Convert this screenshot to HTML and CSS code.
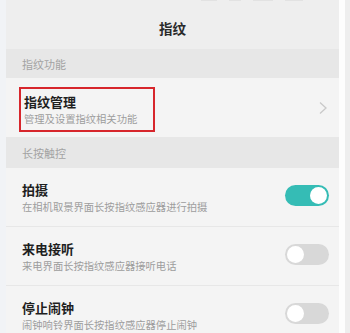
FILE: index.html
```html
<!DOCTYPE html>
<html lang="zh">
<head>
<meta charset="utf-8">
<link rel="stylesheet" href="styles.css">
</head>
<body>
<div class="frame">
  <div class="edge-left"></div>
  <div class="screen">
    <div class="header">
      <div class="status"><span class="s1"></span><span class="s2"></span><span class="s3"></span><span class="s4"></span></div>
      <div class="title">指纹</div>
    </div>
    <div class="section">指纹功能</div>
    <div class="row first">
      <div class="text boxed">
        <div class="name">指纹管理</div>
        <div class="desc">管理及设置指纹相关功能</div>
      </div>
      <svg class="chev" width="10" height="14" viewBox="0 0 10 14"><path d="M2 1.5 L8 7 L2 12.5" fill="none" stroke="#c9c9c9" stroke-width="1.3"/></svg>
    </div>
    <div class="section tall">长按触控</div>
    <div class="row line">
      <div class="text">
        <div class="name">拍摄</div>
        <div class="desc">在相机取景界面长按指纹感应器进行拍摄</div>
      </div>
      <div class="toggle on"><span class="knob"></span></div>
    </div>
    <div class="row line">
      <div class="text">
        <div class="name">来电接听</div>
        <div class="desc">来电界面长按指纹感应器接听电话</div>
      </div>
      <div class="toggle"><span class="knob"></span></div>
    </div>
    <div class="row">
      <div class="text">
        <div class="name">停止闹钟</div>
        <div class="desc">闹钟响铃界面长按指纹感应器停止闹钟</div>
      </div>
      <div class="toggle"><span class="knob"></span></div>
    </div>
  </div>
  <div class="edge-white"></div>
  <div class="edge-gray"></div>
</div>
</body>
</html>
```
FILE: styles.css
```css
html, body {
  margin: 0;
  padding: 0;
  width: 350px;
  height: 333px;
  overflow: hidden;
  background: #f1f1f1;
  font-family: "Noto Sans CJK SC", "Noto Sans", sans-serif;
}
.frame {
  display: flex;
  height: 333px;
}
.edge-left {
  width: 6px;
  background: #f1f3f6;
}
.screen {
  width: 333px;
  display: flex;
  flex-direction: column;
  background: #f4f4f4;
  overflow: hidden;
}
.screen > * {
  flex-shrink: 0;
}
.edge-white {
  width: 6px;
  background: #fdfdfd;
}
.edge-gray {
  flex: 1;
  background: #eeeeee;
}
.header {
  height: 49px;
  background: #eeeeee;
  position: relative;
  display: flex;
  align-items: center;
  justify-content: center;
}
.status {
  position: absolute;
  top: 0;
  left: 195px;
  display: flex;
  gap: 12px;
}
.status span {
  display: block;
  height: 1px;
  background: #e2e2e2;
}
.s1 { width: 16px; }
.s2 { width: 12px; }
.s3 { width: 20px; }
.s4 { width: 18px; }
.title {
  font-size: 13.5px;
  font-weight: 700;
  color: #2a2a2a;
  padding-top: 6px;
}
.section {
  height: 29px;
  background: #e7e7e7;
  color: #a3a3a3;
  font-size: 11px;
  display: flex;
  align-items: center;
  padding-left: 16px;
}
.section.tall {
  height: 31px;
}
.row {
  height: 58px;
  display: flex;
  align-items: center;
  justify-content: space-between;
  padding: 0 10px 0 16px;
  background: #f4f4f4;
}
.row.first {
  height: 59px;
}
.row.line {
  border-bottom: 1px solid #e7e7e7;
}
.text {
  display: flex;
  flex-direction: column;
  gap: 3px;
}
.boxed {
  margin-left: -3px;
  padding: 5px 8px 5px 3px;
  border: 2px solid #d7262c;
  width: 121px;
  margin-top: 3px;
}
.name {
  font-size: 13px;
  font-weight: 700;
  color: #1f1f1f;
  line-height: 16px;
}
.desc {
  font-size: 10.3px;
  color: #9d9d9d;
  line-height: 12px;
  white-space: nowrap;
}
.chev {
  margin-right: 1px;
  margin-top: 1px;
}
.toggle {
  width: 44px;
  height: 21px;
  border-radius: 11px;
  background: #d8d8d8;
  position: relative;
  margin-top: -4px;
}
.knob {
  position: absolute;
  top: 2px;
  left: 2px;
  width: 17px;
  height: 17px;
  border-radius: 50%;
  background: #ffffff;
}
.toggle.on {
  background: #35bcb5;
}
.toggle.on .knob {
  left: 25px;
}
```
